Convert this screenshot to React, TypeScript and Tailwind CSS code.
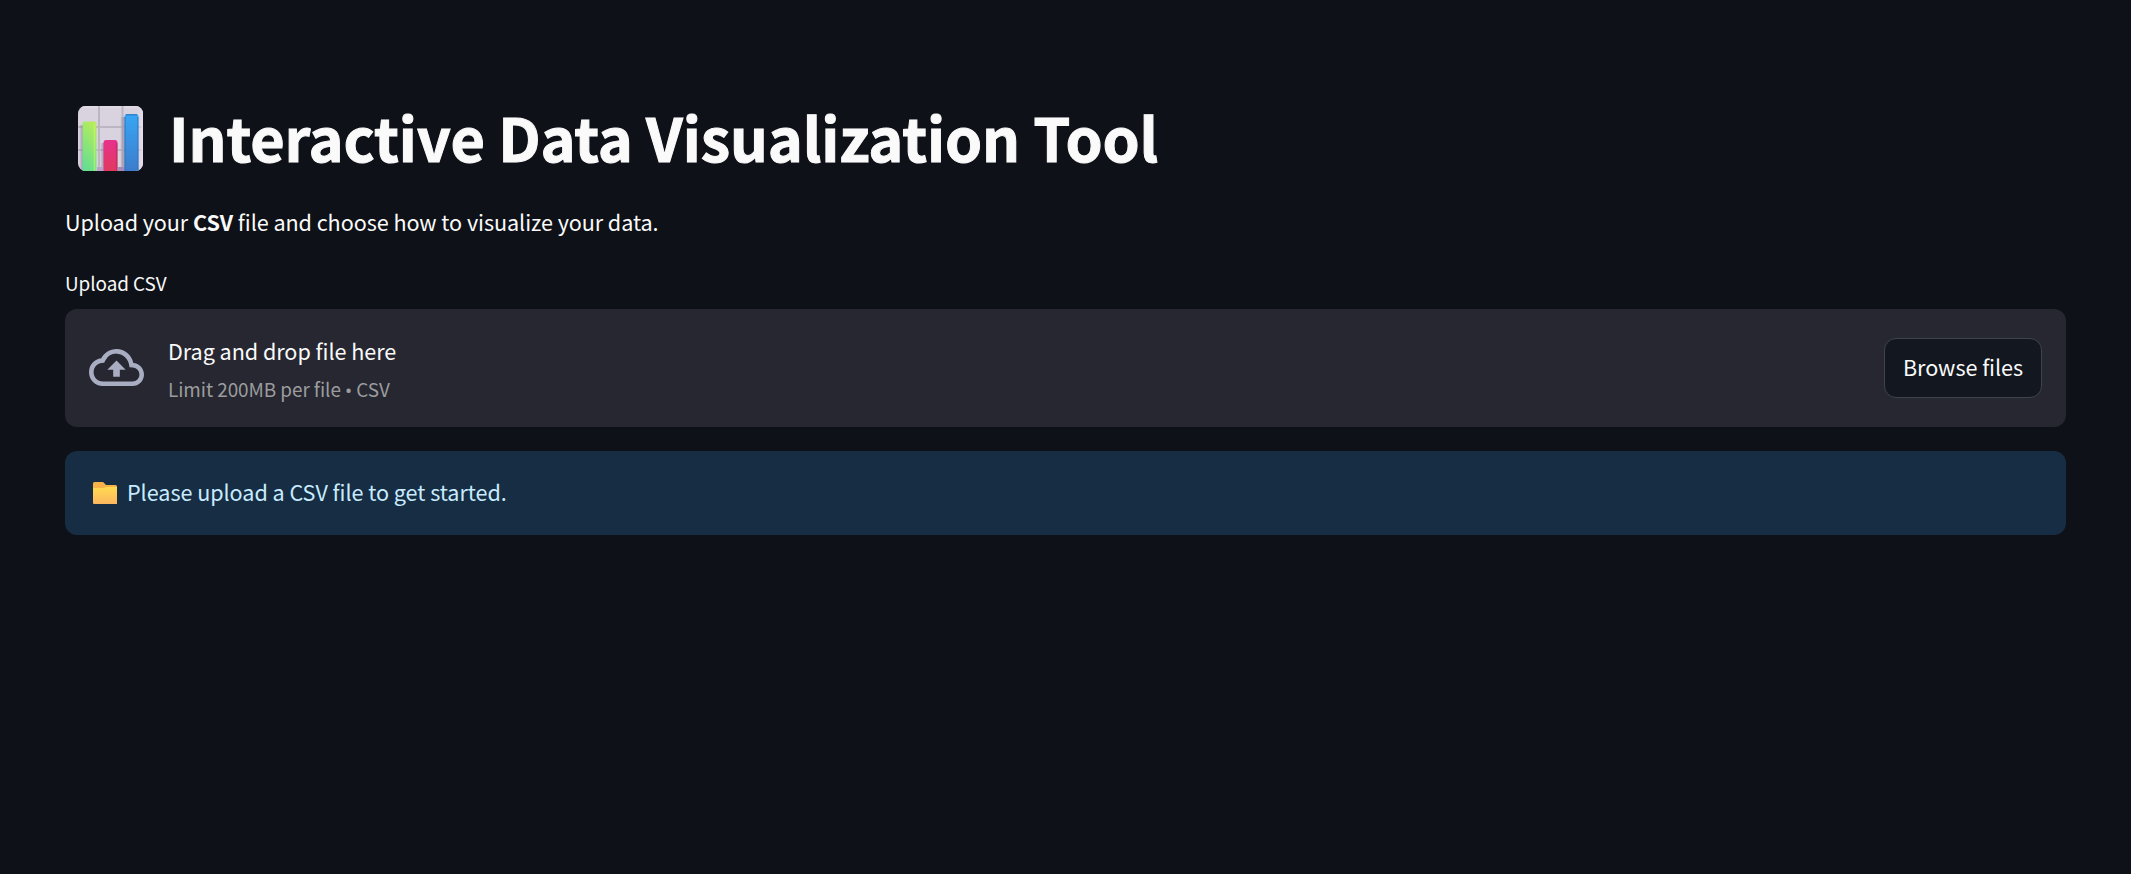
function ChartIcon() {
  return (
    <svg className="mt-1 h-[65px] w-[65px] shrink-0" viewBox="0 0 65 65" fill="none" aria-hidden="true">
      <defs>
        <linearGradient id="green" x1="0.7" y1="0" x2="0.4" y2="1">
          <stop stopColor="#b6ec5c" />
          <stop offset="1" stopColor="#65df90" />
        </linearGradient>
        <linearGradient id="pink" x1="0" y1="0" x2="0" y2="1">
          <stop stopColor="#e8318c" />
          <stop offset="1" stopColor="#e03a60" />
        </linearGradient>
        <linearGradient id="blue" x1="0" y1="0" x2="0" y2="1">
          <stop stopColor="#38a6f4" />
          <stop offset="1" stopColor="#3d7ccd" />
        </linearGradient>
        <linearGradient id="shade" x1="0" y1="0" x2="1" y2="0">
          <stop stopColor="#8d7f9f" stopOpacity="0" />
          <stop offset="1" stopColor="#8d7f9f" stopOpacity="0.7" />
        </linearGradient>
        <linearGradient id="edge" x1="0" y1="0" x2="1" y2="0">
          <stop stopColor="#e6dbe9" stopOpacity="0" />
          <stop offset="1" stopColor="#e8deec" />
        </linearGradient>
        <clipPath id="board">
          <rect width="65" height="65" rx="7.5" />
        </clipPath>
      </defs>
      <g clipPath="url(#board)">
        <rect width="65" height="65" fill="#d9d3e0" />
        <rect width="65" height="2" fill="#e1dae3" />
        <path d="M21 0V65M44.5 0V65M0 21H65M0 44H65" stroke="#bcb6c3" strokeWidth="2" />
        <rect x="59" width="6" height="65" fill="url(#edge)" />
        <rect x="1" y="19" width="4" height="46" fill="url(#shade)" />
        <rect x="22" y="37" width="4" height="28" fill="url(#shade)" />
        <rect x="42" y="11" width="5" height="54" fill="url(#shade)" />
        <rect x="19" y="61" width="7" height="4" fill="#b9a1cf" />
        <rect x="40" y="61" width="7" height="4" fill="#a38bbb" />
        <path d="M4.5 65V18Q4.5 15.5 7 15.5H16Q18.5 15.5 18.5 18V65Z" fill="url(#green)" />
        <path d="M16.5 18V65" stroke="#c6f967" strokeOpacity="0.55" strokeWidth="1.5" />
        <path d="M25.5 65V37Q25.5 34 28 34H37Q39.5 34 39.5 37V65Z" fill="url(#pink)" />
        <path d="M38.7 37V65" stroke="#ad2f60" strokeOpacity="0.6" strokeWidth="1.5" />
        <path d="M46.5 65V11Q46.5 8 49 8H58Q60.5 8 60.5 11V65Z" fill="url(#blue)" />
        <path d="M47.2 11V65M59.8 11V65" stroke="#2d73b4" strokeOpacity="0.5" strokeWidth="1.5" />
        <path d="M48 8.8H59" stroke="#3284cc" strokeWidth="1.5" />
      </g>
    </svg>
  );
}

function FolderIcon() {
  return (
    <svg className="h-[22px] w-6 shrink-0" viewBox="0 0 24 22" aria-hidden="true">
      <defs>
        <linearGradient id="folder" x1="0" y1="0" x2="0" y2="1">
          <stop stopColor="#ffdb50" />
          <stop offset="1" stopColor="#fcb65f" />
        </linearGradient>
      </defs>
      <path d="M0 21V1.5Q0 0 1.5 0H9.5Q10.5 0 11.3 1.2L13 3H22.5Q24 3 24 4.5V10H0Z" fill="#f5b34a" />
      <path d="M0 6H11L13 5H24V22H1Q0 22 0 21Z" fill="url(#folder)" />
    </svg>
  );
}

function CloudUploadIcon() {
  return (
    <svg className="mb-[2px] h-[37px] w-[55px] shrink-0" viewBox="0 4 24 16" preserveAspectRatio="none" fill="#a9adc1" aria-hidden="true">
      <path d="M19.35 10.04A7.49 7.49 0 0 0 12 4C9.11 4 6.6 5.64 5.35 8.04A5.994 5.994 0 0 0 0 14c0 3.31 2.69 6 6 6h13c2.76 0 5-2.24 5-5 0-2.64-2.05-4.78-4.65-4.96zM19 18H6c-2.21 0-4-1.79-4-4 0-2.05 1.53-3.76 3.56-3.97l1.07-.11.5-.95A5.469 5.469 0 0 1 12 6c2.62 0 4.88 1.86 5.39 4.43l.3 1.5 1.53.11A2.98 2.98 0 0 1 22 15c0 1.65-1.35 3-3 3zM8 13h2.55v3h2.9v-3H16l-4-4z" />
    </svg>
  );
}

export default function App() {
  return (
    <main className="h-[874px] overflow-hidden bg-[#0e1117] px-[65px] pt-24 font-['Noto_Sans_CJK_SC','Noto_Sans',sans-serif] text-[21.6px] tracking-[-0.05px] text-[#fafafa]">
      <h1 className="flex h-20 items-center gap-[26px] pl-[13px] text-[59.4px] leading-[80px] font-bold tracking-[-0.12px] whitespace-nowrap [-webkit-text-stroke:1px_#fafafa]">
        <ChartIcon />
        <span>Interactive Data Visualization Tool</span>
      </h1>
      <p className="mt-7 h-9 leading-9 tracking-[-0.07px] whitespace-nowrap">
        Upload your <strong className="font-bold">CSV</strong> file and choose how to visualize your data.
      </p>
      <div className="mt-7 h-[30px] text-[18.9px] leading-[30px]">Upload CSV</div>

      <section className="mt-[11px] flex h-[118px] w-[2001px] items-center rounded-xl bg-[#262730] px-6">
        <CloudUploadIcon />
        <div className="ml-6 flex flex-1 flex-col gap-[5px]">
          <span className="h-9 leading-9">Drag and drop file here</span>
          <span className="h-[30px] text-[18.9px] leading-[30px] text-[#9c9c9f]">
            Limit 200MB per file <span className="font-['Noto_Sans',sans-serif] leading-none">•</span> CSV
          </span>
        </div>
        <button className="flex h-[60px] w-[158px] items-center justify-center rounded-xl border border-[#41434a] bg-[#131720] pb-[2px] leading-9 whitespace-nowrap">
          Browse files
        </button>
      </section>

      <div className="mt-6 flex h-[84px] w-[2001px] items-center gap-[10px] rounded-xl bg-[#172d43] pl-7 text-[#c7ebff]">
        <FolderIcon />
        <span className="pb-[2px] leading-9">Please upload a CSV file to get started.</span>
      </div>
    </main>
  );
}
